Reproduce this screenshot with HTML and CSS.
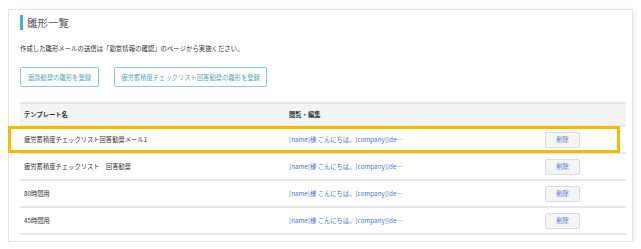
FILE: index.html
```html
<!DOCTYPE html>
<html lang="ja">
<head>
<meta charset="utf-8">
<link rel="stylesheet" href="styles.css">
</head>
<body>
<div class="card">
  <h2 class="title">雛形一覧</h2>
  <p class="desc">作成した雛形メールの送信は「勤怠情報の確認」のページから実施ください。</p>
  <div class="actions">
    <button class="btn-outline btn-a">面談勧奨の雛形を登録</button>
    <button class="btn-outline btn-b">疲労蓄積度チェックリスト回答勧奨の雛形を登録</button>
  </div>
  <div class="table-wrap">
    <table class="tpl">
      <thead>
        <tr><th class="c-name">テンプレート名</th><th class="c-prev">閲覧・編集</th><th class="c-act"></th></tr>
      </thead>
      <tbody>
        <tr><td class="c-name">疲労蓄積度チェックリスト回答勧奨メール1</td><td class="c-prev"><a class="link">[name]様 こんにちは。[company][de…</a></td><td class="c-act"><button class="btn-del">削除</button></td></tr>
        <tr><td class="c-name">疲労蓄積度チェックリスト　回答勧奨</td><td class="c-prev"><a class="link">[name]様 こんにちは。[company][de…</a></td><td class="c-act"><button class="btn-del">削除</button></td></tr>
        <tr><td class="c-name">80時間用</td><td class="c-prev"><a class="link">[name]様 こんにちは。[company][de…</a></td><td class="c-act"><button class="btn-del">削除</button></td></tr>
        <tr><td class="c-name">45時間用</td><td class="c-prev"><a class="link">[name]様 こんにちは。[company][de…</a></td><td class="c-act"><button class="btn-del">削除</button></td></tr>
      </tbody>
    </table>
    <div class="highlight"></div>
  </div>
</div>
</body>
</html>
```
FILE: styles.css
```css
* { box-sizing: border-box; }
html, body { background: #fff; }
body {
  margin: 0;
  padding: 9px 8px 0 8px;
  font-family: "Noto Sans CJK JP", "Noto Sans", sans-serif;
  color: #333;
}
.card {
  width: 625px;
  height: 233px;
  border: 1px solid #e4e4e4;
  padding: 5px 7px 0 11px;
  box-shadow: 3px 0 5px rgba(0,0,0,0.06);
  background: #fff;
}
.title {
  margin: 0;
  height: 15px;
  border-left: 3px solid #3eb4cf;
  padding-left: 4px;
  font-size: 10.5px;
  font-weight: normal;
  line-height: 15px;
  color: #555;
}
.desc {
  margin: 14px 0 0 0;
  font-size: 6.4px;
  line-height: 9px;
  color: #333;
}
.actions {
  display: flex;
  gap: 15px;
  margin-top: 14px;
}
.btn-outline {
  height: 20px;
  border: 1.5px solid #8fcbd8;
  border-radius: 2px;
  background: #fff;
  color: #5aa5b8;
  font-family: inherit;
  font-size: 6.3px;
  padding: 0;
}
.btn-a { width: 79px; }
.btn-b { width: 153px; }
.table-wrap {
  position: relative;
  margin-top: 15px;
  width: 606px;
}
.tpl {
  width: 606px;
  border-collapse: collapse;
  table-layout: fixed;
  font-size: 6.3px;
}
.tpl th {
  background: #f4f4f4;
  border-top: 2px solid #e6e6e6;
  height: 23px;
  text-align: left;
  font-weight: bold;
  color: #333;
  padding: 0 0 0 4px;
}
.tpl td {
  height: 27px;
  border-top: 2px solid #e8e8e8;
  padding: 0 0 0 4px;
  color: #333;
}
.tpl tbody tr:last-child td { border-bottom: 2px solid #e8e8e8; }
.c-name { width: 265px; }
.c-prev { width: 240px; }
.c-act { width: 101px; }
.tpl td.c-act { padding-left: 20px; }
.link { color: #4a78d4; text-decoration: none; }
.btn-del {
  width: 35px;
  height: 16px;
  background: #f5f5f5;
  border: 1px solid #dcdcdc;
  border-radius: 2px;
  color: #5a78c8;
  font-family: inherit;
  font-size: 6.3px;
  padding: 0;
}
.highlight {
  position: absolute;
  left: -12px;
  top: 24px;
  width: 612px;
  height: 27px;
  border: 3px solid #f7ba00;
  pointer-events: none;
}
```
